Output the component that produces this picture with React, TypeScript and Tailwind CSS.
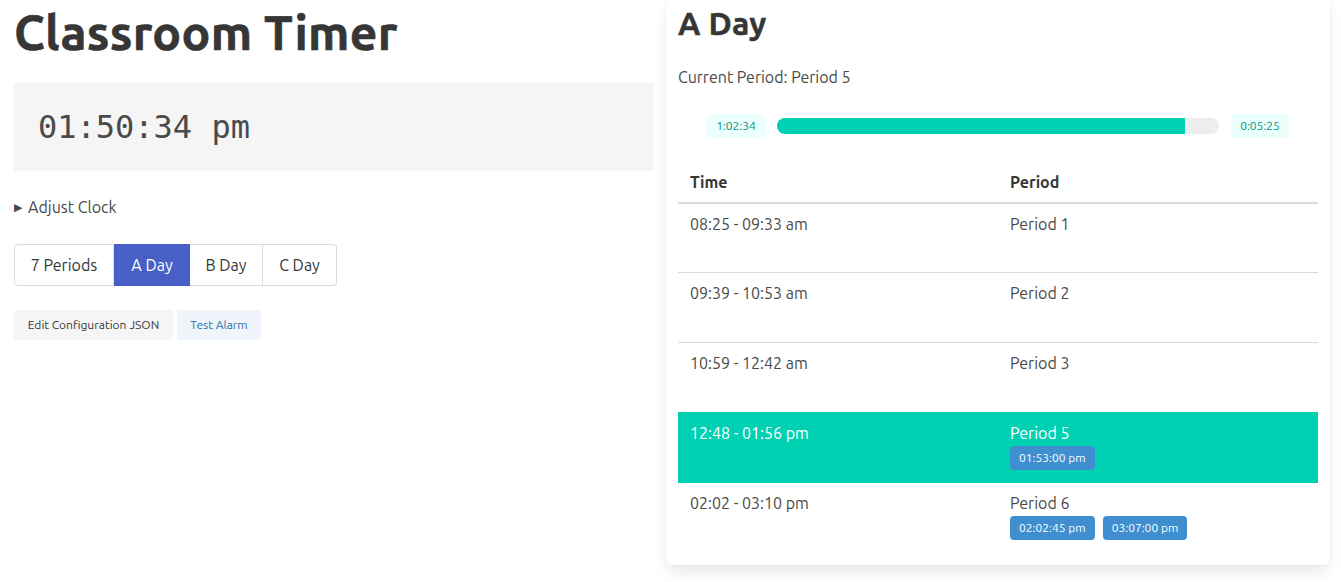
import React from "react";

const rows = [
  { time: "08:25 - 09:33 am", name: "Period 1", tags: [] as string[] },
  { time: "09:39 - 10:53 am", name: "Period 2", tags: [] as string[] },
  { time: "10:59 - 12:42 am", name: "Period 3", tags: [] as string[] },
  { time: "12:48 - 01:56 pm", name: "Period 5", tags: ["01:53:00 pm"], selected: true },
  { time: "02:02 - 03:10 pm", name: "Period 6", tags: ["02:02:45 pm", "03:07:00 pm"] },
];

export default function App() {
  const font = { fontFamily: "Ubuntu, Lato, 'Noto Sans', sans-serif" };
  return (
    <div className="w-[1341px] h-[582px] bg-white text-[#4a4a4a] text-[16px] leading-6 overflow-hidden" style={font}>
      <div className="flex pl-[14px] pr-[11px] gap-[12px] items-start">
        {/* Left column */}
        <div className="w-[640px] pt-[5px]">
          <h1 className="text-[48px] leading-[54px] font-bold tracking-[0.3px] [-webkit-text-stroke:0.6px_#363636] text-[#363636] mb-6">Classroom Timer</h1>
          <div
            className="bg-[#f5f5f5] px-6 py-5 text-[32px] leading-[48px] text-[#4a4a4a]"
            style={{ fontFamily: "'DejaVu Sans Mono', monospace" }}
          >
            01:50:34 pm
          </div>
          <details className="mt-6">
            <summary className="cursor-pointer list-none flex items-center [&::-webkit-details-marker]:hidden">
              <span className="w-[14px] text-[11px] leading-6">▶</span>
              <span>Adjust Clock</span>
            </summary>
          </details>
          <div className="flex mt-[25px]">
            <button className="w-[100px] h-[42px] border border-[#dbdbdb] rounded-l-[4px] bg-white text-[#363636]">7 Periods</button>
            <button className="w-[76px] h-[42px] border border-[#485fc7] bg-[#485fc7] text-white">A Day</button>
            <button className="w-[73px] h-[42px] border border-l-0 border-[#dbdbdb] bg-white text-[#363636]">B Day</button>
            <button className="w-[74px] h-[42px] border border-l-0 border-[#dbdbdb] rounded-r-[4px] bg-white text-[#363636]">C Day</button>
          </div>
          <div className="flex gap-1 mt-6">
            <button className="w-[159px] h-[30px] rounded-[2px] bg-[#f5f5f5] text-[#363636] text-[12px]">Edit Configuration JSON</button>
            <button className="w-[84px] h-[30px] rounded-[2px] bg-[#eff5fb] text-[#296fa8] text-[12px]">Test Alarm</button>
          </div>
        </div>

        {/* Right card */}
        <div className="w-[664px] bg-white rounded-b-[6px] shadow-[0_8px_16px_-2px_rgba(10,10,10,0.1),0_0_0_1px_rgba(10,10,10,0.02)] px-3 pt-[5px] pb-3">
          <h2 className="text-[32px] leading-[36px] font-bold tracking-[0.2px] [-webkit-text-stroke:0.4px_#363636] text-[#363636]">A Day</h2>
          <p className="mt-6">Current Period: Period 5</p>
          <div className="flex items-center gap-3 px-[29px] mt-[25px] mb-6">
            <span className="h-6 w-[58px] flex items-center justify-center rounded-[4px] bg-[#ebfffc] text-[#00947e] text-[12px]">1:02:34</span>
            <div className="flex-1 h-4 rounded-full bg-[#ededed] overflow-hidden">
              <div className="h-full bg-[#00d1b2]" style={{ width: "92.3%" }} />
            </div>
            <span className="h-6 w-[58px] flex items-center justify-center rounded-[4px] bg-[#ebfffc] text-[#00947e] text-[12px]">0:05:25</span>
          </div>
          <table className="w-full border-collapse">
            <thead>
              <tr>
                <th className="w-1/2 text-left font-bold text-[#363636] px-3 py-2 border-b-2 border-[#dbdbdb]">Time</th>
                <th className="w-1/2 text-left font-bold text-[#363636] px-3 py-2 border-b-2 border-[#dbdbdb]">Period</th>
              </tr>
            </thead>
            <tbody>
              {rows.map((r, i) => {
                const last = i === rows.length - 1;
                const nextSelected = !!rows[i + 1]?.selected;
                const cell = r.selected
                  ? "bg-[#00d1b2] text-white border-b border-[#00d1b2]"
                  : last
                  ? "border-b-0"
                  : nextSelected
                  ? "border-b border-[#00d1b2]"
                  : "border-b border-[#dbdbdb]";
                const h = i === 0 ? "h-[69px]" : "h-[70px]";
                return (
                  <tr key={i}>
                    <td className={`align-top px-3 pt-2 pb-2 ${h} ${cell}`}>{r.time}</td>
                    <td className={`align-top px-3 pt-2 pb-2 ${h} ${cell}`}>
                      <div>{r.name}</div>
                      <div className="flex gap-2 h-[28px] pt-px items-start">
                        {r.tags.map((t) => (
                          <span key={t} className="h-6 px-[9px] flex items-center rounded-[4px] bg-[#3e8ed0] text-white text-[12px]">
                            {t}
                          </span>
                        ))}
                      </div>
                    </td>
                  </tr>
                );
              })}
            </tbody>
          </table>
        </div>
      </div>
    </div>
  );
}
